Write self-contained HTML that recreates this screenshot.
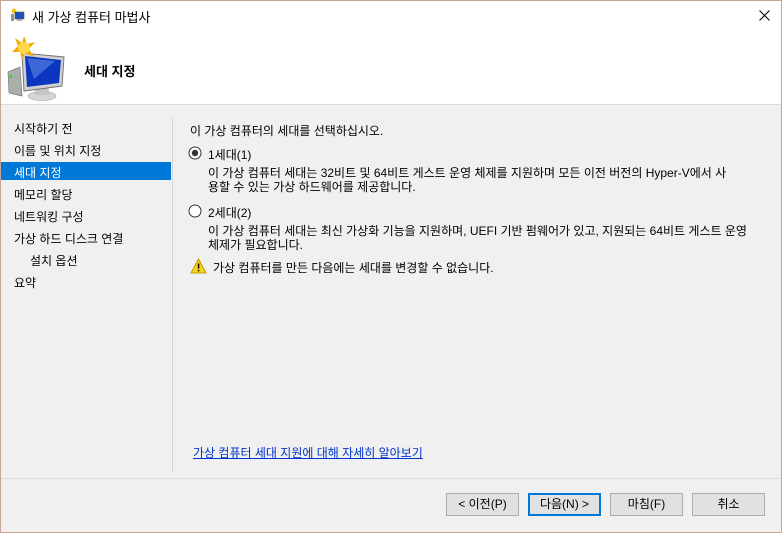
<!DOCTYPE html>
<html><head><meta charset="utf-8"><style>
*{margin:0;padding:0;box-sizing:border-box}
body{width:782px;height:533px;overflow:hidden;background:#f0f0f0;font-family:"Liberation Sans","Noto Sans CJK KR","NanumGothic",sans-serif;font-size:12px;color:#000;position:relative}
.a{position:absolute;white-space:nowrap}
.frame{position:absolute;left:0;top:0;width:782px;height:533px;border:1px solid #c9a595;pointer-events:none}
.btn{position:absolute;top:493px;width:73px;height:23px;background:#e1e1e1;border:1px solid #adadad;text-align:center;line-height:21px;font-size:12px}
.nav{position:absolute;left:14px;font-size:12px}
</style></head><body>
<div class="a" style="left:0;top:0;width:782px;height:104px;background:#fff"></div>
<div class="a" style="left:0;top:104px;width:782px;height:1px;background:#dadada"></div>
<svg class="a" style="left:10px;top:8px" width="16" height="14" viewBox="0 0 16 14"><circle cx="4" cy="3" r="2.5" fill="#f4c21a"/><rect x="1" y="6" width="3" height="7" fill="#8a9a8a"/><rect x="5" y="4" width="9" height="7" fill="#1c4fb8" stroke="#555" stroke-width=".6"/><rect x="7" y="11" width="5" height="2" fill="#aaa"/></svg>
<div class="a" style="left:32px;top:7px;font-size:13px">새 가상 컴퓨터 마법사</div>
<svg class="a" style="left:759px;top:10px" width="11" height="11" viewBox="0 0 11 11"><path d="M0.5 0.5L10.5 10.5M10.5 0.5L0.5 10.5" stroke="#000" stroke-width="1"/></svg>
<svg class="a" style="left:0;top:33px" width="80" height="72" viewBox="0 0 80 72">
<path d="M8 39 L20 34 L22 63 L9 60Z" fill="#a8b0a8" stroke="#777" stroke-width=".7"/>
<rect x="10" y="42" width="2" height="3" fill="#3c3"/>
<ellipse cx="42" cy="63" rx="14" ry="4.5" fill="#d6d6d6" stroke="#aaa" stroke-width=".6"/>
<path d="M36 54 L48 54 L50 62 L34 62Z" fill="#c4c4c4"/>
<path d="M22 20 L64 24 L62 53 L24 58Z" fill="#d0d0d0" stroke="#777"/>
<path d="M25 23 L61 27 L59 50 L27 54Z" fill="#0c35c0"/>
<path d="M27 25 L55 28 L34 46Z" fill="#5c88ea" opacity=".6"/>
<g transform="translate(24,15)"><path d="M0-12L3-4L11-6L5 1L10 9L1 5L-2 12L-4 4L-12 4L-6-2L-9-10L-2-5Z" fill="#f2a900"/><circle r="6" fill="#ffd84a"/></g>
</svg>
<div class="a" style="left:84px;top:61px;font-size:13px;font-weight:bold">세대 지정</div>
<div class="nav" style="top:120px">시작하기 전</div>
<div class="nav" style="top:142px">이름 및 위치 지정</div>
<div class="a" style="left:0;top:162px;width:171px;height:18px;background:#0078d7"></div>
<div class="nav" style="top:164px;color:#fff">세대 지정</div>
<div class="nav" style="top:186px">메모리 할당</div>
<div class="nav" style="top:208px">네트워킹 구성</div>
<div class="nav" style="top:230px">가상 하드 디스크 연결</div>
<div class="nav" style="top:252px;left:30px">설치 옵션</div>
<div class="nav" style="top:274px">요약</div>
<div class="a" style="left:172px;top:117px;width:1px;height:355px;background:#d6d6d6"></div>
<div class="a" style="left:190px;top:122px">이 가상 컴퓨터의 세대를 선택하십시오.</div>
<svg class="a" style="left:188px;top:146px" width="14" height="14"><circle cx="7" cy="7" r="6" fill="#fff" stroke="#333"/><circle cx="7" cy="7" r="3.2" fill="#333"/></svg>
<div class="a" style="left:208px;top:146px">1세대(1)</div>
<div class="a" style="left:208px;top:166px;line-height:14px">이 가상 컴퓨터 세대는 32비트 및 64비트 게스트 운영 체제를 지원하며 모든 이전 버전의 Hyper-V에서 사<br>용할 수 있는 가상 하드웨어를 제공합니다.</div>
<svg class="a" style="left:188px;top:204px" width="14" height="14"><circle cx="7" cy="7" r="6" fill="#fff" stroke="#333"/></svg>
<div class="a" style="left:208px;top:204px">2세대(2)</div>
<div class="a" style="left:208px;top:224px;line-height:14px">이 가상 컴퓨터 세대는 최신 가상화 기능을 지원하며, UEFI 기반 펌웨어가 있고, 지원되는 64비트 게스트 운영<br>체제가 필요합니다.</div>
<svg class="a" style="left:190px;top:258px" width="17" height="16" viewBox="0 0 17 16"><path d="M8.5 1L16 15H1Z" fill="#f5d31f" stroke="#c49a00"/><rect x="7.8" y="5.5" width="1.5" height="5" fill="#000"/><rect x="7.8" y="11.8" width="1.5" height="1.5" fill="#000"/></svg>
<div class="a" style="left:213px;top:259px">가상 컴퓨터를 만든 다음에는 세대를 변경할 수 없습니다.</div>
<div class="a" style="left:193px;top:444px;color:#0033cc;text-decoration:underline">가상 컴퓨터 세대 지원에 대해 자세히 알아보기</div>
<div class="a" style="left:0;top:478px;width:782px;height:1px;background:#dcdcdc"></div>
<div class="btn" style="left:446px">&lt; 이전(P)</div>
<div class="btn" style="left:528px;border:2px solid #0078d7;line-height:19px">다음(N) &gt;</div>
<div class="btn" style="left:610px">마침(F)</div>
<div class="btn" style="left:692px">취소</div>
<div class="frame"></div>
</body></html>
